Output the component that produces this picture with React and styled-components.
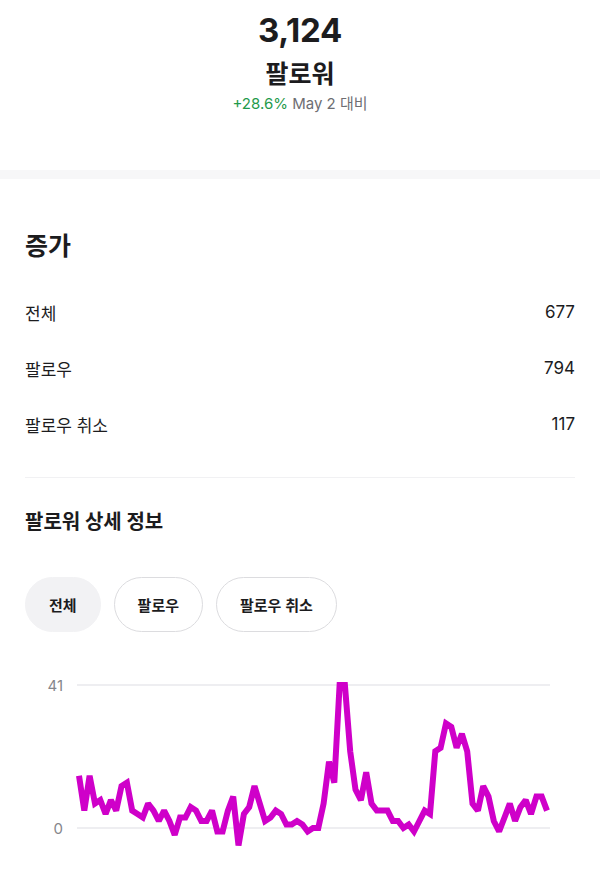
import React from 'react';
import styled, {createGlobalStyle} from 'styled-components';

const GlobalStyle = createGlobalStyle`
  body {
    margin: 0;
    background: #fff;
    font-family: Inter, "Noto Sans CJK KR", sans-serif;
    color: #1c1c1e;
  }
`;

const series = [
    15, 5, 15, 7, 8, 4, 8, 5, 12, 13, 5, 4, 3, 7, 5, 2, 5, 2, -2, 3, 3, 6, 5, 2, 2, 5, -1, -1, 5, 9, -5, 4, 6, 12, 7, 2, 3, 5, 4, 1, 1, 2,
    1, -1, 0, 0, 7, 19, 13, 41, 41, 22, 11, 8, 16, 7, 5, 5, 5, 2, 2, 0, 1, -1, 2, 5, 4, 22, 23, 30, 29, 23, 27, 22, 7, 5, 12, 9, 2, -1, 3, 7, 2, 6, 8, 4, 9, 9, 5,
];

const rows = [
    {label: '전체', value: 677},
    {label: '팔로우', value: 794},
    {label: '팔로우 취소', value: 117},
];

const filters = ['전체', '팔로우', '팔로우 취소'];

const FollowerChart = () => {
    const top = 26, zero = 169, max = 41;
    const x0 = 79, x1 = 547;
    const step = (x1 - x0) / (series.length - 1);
    const y = (v) => zero - v * (zero - top) / max;
    const d = series.map((v, i) => `${i ? 'L' : 'M'}${(x0 + i * step).toFixed(1)} ${y(v).toFixed(1)}`).join(' ');

    return (
        <ChartSvg viewBox="0 0 600 210">
            <GridLine x1="77" x2="550" y1={top} y2={top}/>
            <GridLine x1="77" x2="550" y1={zero} y2={zero}/>
            <AxisLabel x="63" y={top + 5.5}>41</AxisLabel>
            <AxisLabel x="63" y={zero + 5.5}>0</AxisLabel>
            <path d={d} fill="none" stroke="#cf00c9" strokeWidth="6"
                  strokeLinejoin="miter" strokeMiterlimit="2" strokeLinecap="butt"/>
        </ChartSvg>
    );
};

const App = () => {
    return (
        <Page>
            <GlobalStyle/>
            <Header>
                <Count>3,124</Count>
                <Title>팔로워</Title>
                <Delta><Up>+28.6%</Up> May 2 대비</Delta>
            </Header>
            <Band/>
            <Section>
                <SectionTitle>증가</SectionTitle>
                <Rows>
                    {rows.map(r => (
                        <Row key={r.label}>
                            <span>{r.label}</span>
                            <span>{r.value}</span>
                        </Row>
                    ))}
                </Rows>
                <Divider/>
                <SubTitle>팔로워 상세 정보</SubTitle>
                <Pills>
                    {filters.map((f, i) => (
                        <Pill key={f} $active={i === 0}>{f}</Pill>
                    ))}
                </Pills>
            </Section>
            <FollowerChart/>
        </Page>
    );
};

const Page = styled.div`
  width: 600px;
  min-height: 887px;
  background: #fff;
`;

const Header = styled.header`
  height: 170px;
  box-sizing: border-box;
  padding-top: 10px;
  display: flex;
  flex-direction: column;
  align-items: center;
`;

const Count = styled.div`
  font-size: 33px;
  line-height: 40px;
  font-weight: 700;
  letter-spacing: -0.3px;
  color: #1c1c1e;
`;

const Title = styled.div`
  margin-top: 8px;
  font-size: 25px;
  line-height: 32px;
  font-weight: 700;
  color: #1c1c1e;
`;

const Delta = styled.div`
  margin-top: 4px;
  font-size: 15px;
  line-height: 20px;
  color: #6e6e73;
`;

const Up = styled.span`
  color: #1f9a4b;
`;

const Band = styled.div`
  height: 9px;
  background: #f7f7f8;
`;

const Section = styled.section`
  padding: 0 25px;
  display: flex;
  flex-direction: column;
`;

const SectionTitle = styled.h2`
  margin: 49px 0 0;
  font-size: 25px;
  line-height: 36px;
  font-weight: 700;
  color: #1c1c1e;
`;

const Rows = styled.div`
  margin-top: 20px;
  display: flex;
  flex-direction: column;
`;

const Row = styled.div`
  height: 56px;
  display: flex;
  align-items: center;
  justify-content: space-between;
  font-size: 17px;
  color: #1c1c1e;
`;

const Divider = styled.div`
  margin-top: 25px;
  height: 1px;
  background: #f1f1f3;
`;

const SubTitle = styled.h3`
  margin: 29px 0 0;
  font-size: 20px;
  line-height: 30px;
  font-weight: 700;
  color: #1c1c1e;
`;

const Pills = styled.div`
  margin-top: 40px;
  display: flex;
  gap: 13px;
`;

const Pill = styled.button`
  height: 55px;
  padding: 0 23px;
  border-radius: 28px;
  box-sizing: border-box;
  border: 1.5px solid ${p => (p.$active ? '#f2f2f4' : '#dcdcdf')};
  background: ${p => (p.$active ? '#f2f2f4' : '#fff')};
  font-family: Inter, "Noto Sans CJK KR", sans-serif;
  font-size: 15px;
  font-weight: 600;
  color: #1c1c1e;
`;

const ChartSvg = styled.svg`
  display: block;
  margin-top: 27px;
  width: 600px;
  height: 210px;
`;

const GridLine = styled.line`
  stroke: #e9e9ec;
  stroke-width: 1.5;
`;

const AxisLabel = styled.text`
  font-family: Inter, sans-serif;
  font-size: 15px;
  fill: #86868b;
  text-anchor: end;
`;

export default App;
